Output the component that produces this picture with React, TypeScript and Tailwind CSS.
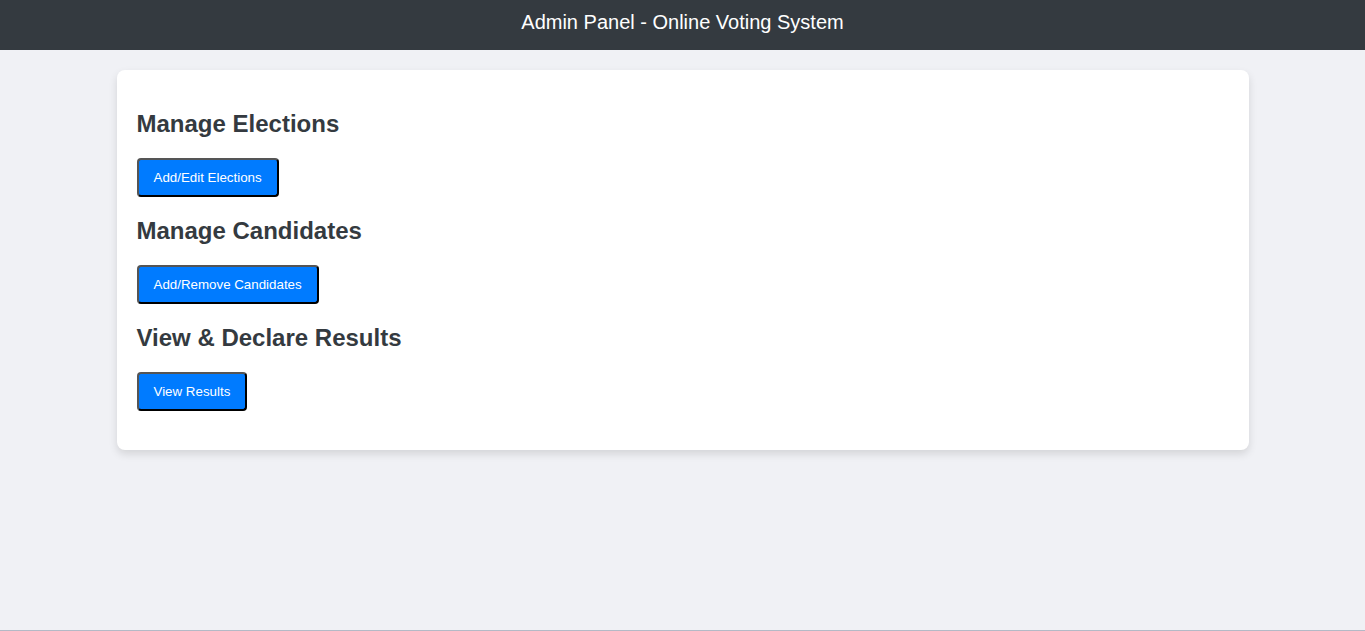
import React from "react";

const sections = [
  { title: "Manage Elections", button: "Add/Edit Elections" },
  { title: "Manage Candidates", button: "Add/Remove Candidates" },
  { title: "View & Declare Results", button: "View Results" },
];

export default function App() {
  return (
    <div
      className="h-[631px] flex flex-col bg-[#f0f1f5] border-b border-[#b4b9c6] overflow-hidden"
      style={{ fontFamily: '"Liberation Sans", Arial, sans-serif' }}
    >
      <header className="h-[50px] shrink-0 bg-[#343a40] text-white text-[20px] leading-[23px] pt-[11px] text-center">
        Admin Panel - Online Voting System
      </header>
      <main className="flex justify-center pt-[20px]">
        <div className="w-[1132px] bg-white rounded-[8px] shadow-[0_4px_8px_rgba(0,0,0,0.12)] px-[20px] pt-[20px] pb-[39px]">
          {sections.map((s) => (
            <div key={s.title}>
              <h2 className="mt-[20px] mb-[20px] text-[24px] leading-[28px] font-bold text-[#343a40]">
                {s.title}
              </h2>
              <button className="h-[39px] px-[15px] bg-[#007bff] text-white text-[13.33px] leading-[15px] rounded-[4px] border-2 border-solid border-t-[#555] border-l-[#555] border-r-black border-b-black">
                {s.button}
              </button>
            </div>
          ))}
        </div>
      </main>
    </div>
  );
}
